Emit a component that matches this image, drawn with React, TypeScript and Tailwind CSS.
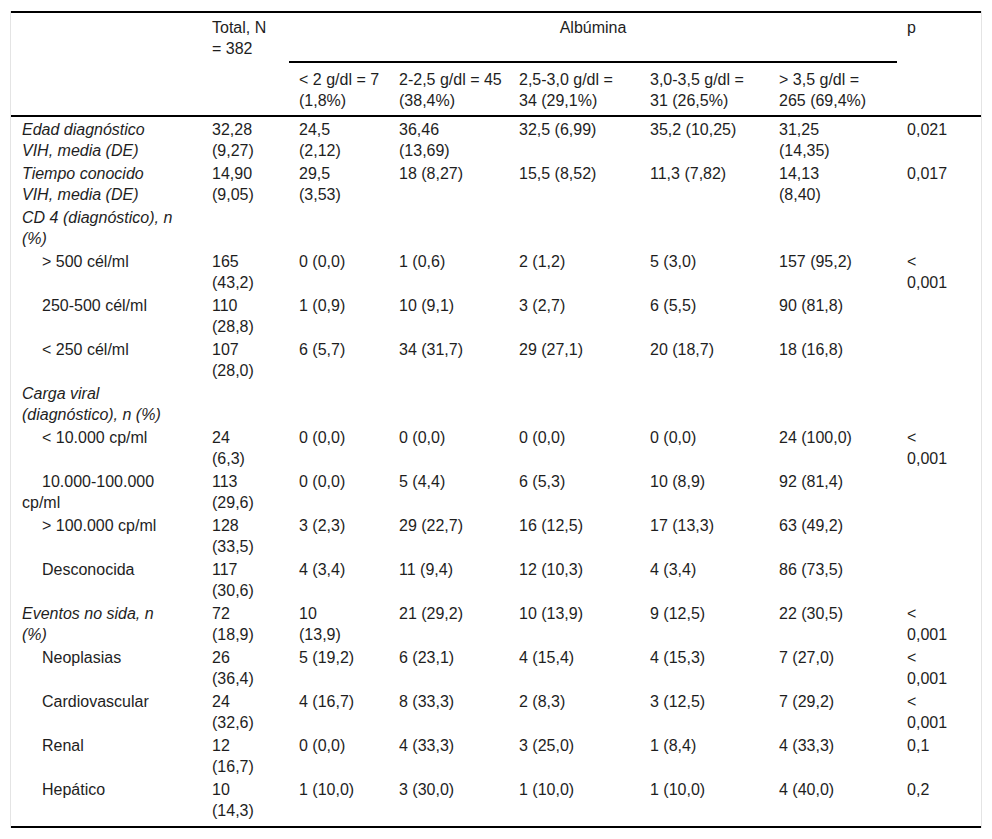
type Row = {
    label: string;
    kind: 'head' | 'sub';
    cells: string[];
};

const rows: Row[] = [
    { label: 'Edad diagnóstico\nVIH, media (DE)', kind: 'head', cells: ['32,28\n(9,27)', '24,5\n(2,12)', '36,46\n(13,69)', '32,5 (6,99)', '35,2 (10,25)', '31,25\n(14,35)', '0,021'] },
    { label: 'Tiempo conocido\nVIH, media (DE)', kind: 'head', cells: ['14,90\n(9,05)', '29,5\n(3,53)', '18 (8,27)', '15,5 (8,52)', '11,3 (7,82)', '14,13\n(8,40)', '0,017'] },
    { label: 'CD 4 (diagnóstico), n\n(%)', kind: 'head', cells: ['', '', '', '', '', '', ''] },
    { label: '> 500 cél/ml', kind: 'sub', cells: ['165\n(43,2)', '0 (0,0)', '1 (0,6)', '2 (1,2)', '5 (3,0)', '157 (95,2)', '<\n0,001'] },
    { label: '250-500 cél/ml', kind: 'sub', cells: ['110\n(28,8)', '1 (0,9)', '10 (9,1)', '3 (2,7)', '6 (5,5)', '90 (81,8)', ''] },
    { label: '< 250 cél/ml', kind: 'sub', cells: ['107\n(28,0)', '6 (5,7)', '34 (31,7)', '29 (27,1)', '20 (18,7)', '18 (16,8)', ''] },
    { label: 'Carga viral\n(diagnóstico), n (%)', kind: 'head', cells: ['', '', '', '', '', '', ''] },
    { label: '< 10.000 cp/ml', kind: 'sub', cells: ['24\n(6,3)', '0 (0,0)', '0 (0,0)', '0 (0,0)', '0 (0,0)', '24 (100,0)', '<\n0,001'] },
    { label: '10.000-100.000\ncp/ml', kind: 'sub', cells: ['113\n(29,6)', '0 (0,0)', '5 (4,4)', '6 (5,3)', '10 (8,9)', '92 (81,4)', ''] },
    { label: '> 100.000 cp/ml', kind: 'sub', cells: ['128\n(33,5)', '3 (2,3)', '29 (22,7)', '16 (12,5)', '17 (13,3)', '63 (49,2)', ''] },
    { label: 'Desconocida', kind: 'sub', cells: ['117\n(30,6)', '4 (3,4)', '11 (9,4)', '12 (10,3)', '4 (3,4)', '86 (73,5)', ''] },
    { label: 'Eventos no sida, n\n(%)', kind: 'head', cells: ['72\n(18,9)', '10\n(13,9)', '21 (29,2)', '10 (13,9)', '9 (12,5)', '22 (30,5)', '<\n0,001'] },
    { label: 'Neoplasias', kind: 'sub', cells: ['26\n(36,4)', '5 (19,2)', '6 (23,1)', '4 (15,4)', '4 (15,3)', '7 (27,0)', '<\n0,001'] },
    { label: 'Cardiovascular', kind: 'sub', cells: ['24\n(32,6)', '4 (16,7)', '8 (33,3)', '2 (8,3)', '3 (12,5)', '7 (29,2)', '<\n0,001'] },
    { label: 'Renal', kind: 'sub', cells: ['12\n(16,7)', '0 (0,0)', '4 (33,3)', '3 (25,0)', '1 (8,4)', '4 (33,3)', '0,1'] },
    { label: 'Hepático', kind: 'sub', cells: ['10\n(14,3)', '1 (10,0)', '3 (30,0)', '1 (10,0)', '1 (10,0)', '4 (40,0)', '0,2'] },
];

const albuminGroups = [
    '< 2 g/dl = 7\n(1,8%)',
    '2-2,5 g/dl = 45\n(38,4%)',
    '2,5-3,0 g/dl =\n34 (29,1%)',
    '3,0-3,5 g/dl =\n31 (26,5%)',
    '> 3,5 g/dl =\n265 (69,4%)',
];

function App() {
    return (
        <div className="min-h-screen bg-white px-[10px] pt-[11px] font-['Liberation_Sans',Arial,sans-serif] text-[16px] leading-[21px] text-[#1e1e1e]">
            <div className="border-x border-[#e4e4e4]">
                <table className="w-full table-fixed border-separate border-spacing-0 border-y-2 border-black">
                    <colgroup>
                        <col className="w-[191px]" />
                        <col className="w-[87px]" />
                        <col className="w-[100px]" />
                        <col className="w-[120px]" />
                        <col className="w-[131px]" />
                        <col className="w-[129px]" />
                        <col className="w-[128px]" />
                        <col className="w-[84px]" />
                    </colgroup>
                    <thead>
                        <tr>
                            <th rowSpan={2} className="border-b-2 border-black" />
                            <th rowSpan={2} className="border-b-2 border-black pl-[10px] pt-[4px] text-left align-top font-normal whitespace-pre">
                                {'Total, N\n= 382'}
                            </th>
                            <th colSpan={5} className="border-b-2 border-black pt-[4px] pb-[23px] text-center align-top font-normal">
                                Albúmina
                            </th>
                            <th rowSpan={2} className="border-b-2 border-black pl-[10px] pt-[4px] text-left align-top font-normal">
                                p
                            </th>
                        </tr>
                        <tr>
                            {albuminGroups.map((g) => (
                                <th key={g} className="border-b-2 border-black pl-[10px] pt-[6px] pb-[4px] text-left align-top font-normal whitespace-pre">
                                    {g}
                                </th>
                            ))}
                        </tr>
                    </thead>
                    <tbody>
                        {rows.map((row, i) => {
                            const last = i === rows.length - 1;
                            const pad = last ? 'pt-[2px] pb-[5px]' : 'pt-[2px]';
                            return (
                                <tr key={row.label}>
                                    <td className={`${pad} pl-[11px] align-top whitespace-pre ${row.kind === 'head' ? 'italic' : 'indent-5'}`}>
                                        {row.label}
                                    </td>
                                    {row.cells.map((c, j) => (
                                        <td key={j} className={`${pad} pl-[10px] align-top whitespace-pre`}>
                                            {c}
                                        </td>
                                    ))}
                                </tr>
                            );
                        })}
                    </tbody>
                </table>
            </div>
        </div>
    );
}

export default App;
